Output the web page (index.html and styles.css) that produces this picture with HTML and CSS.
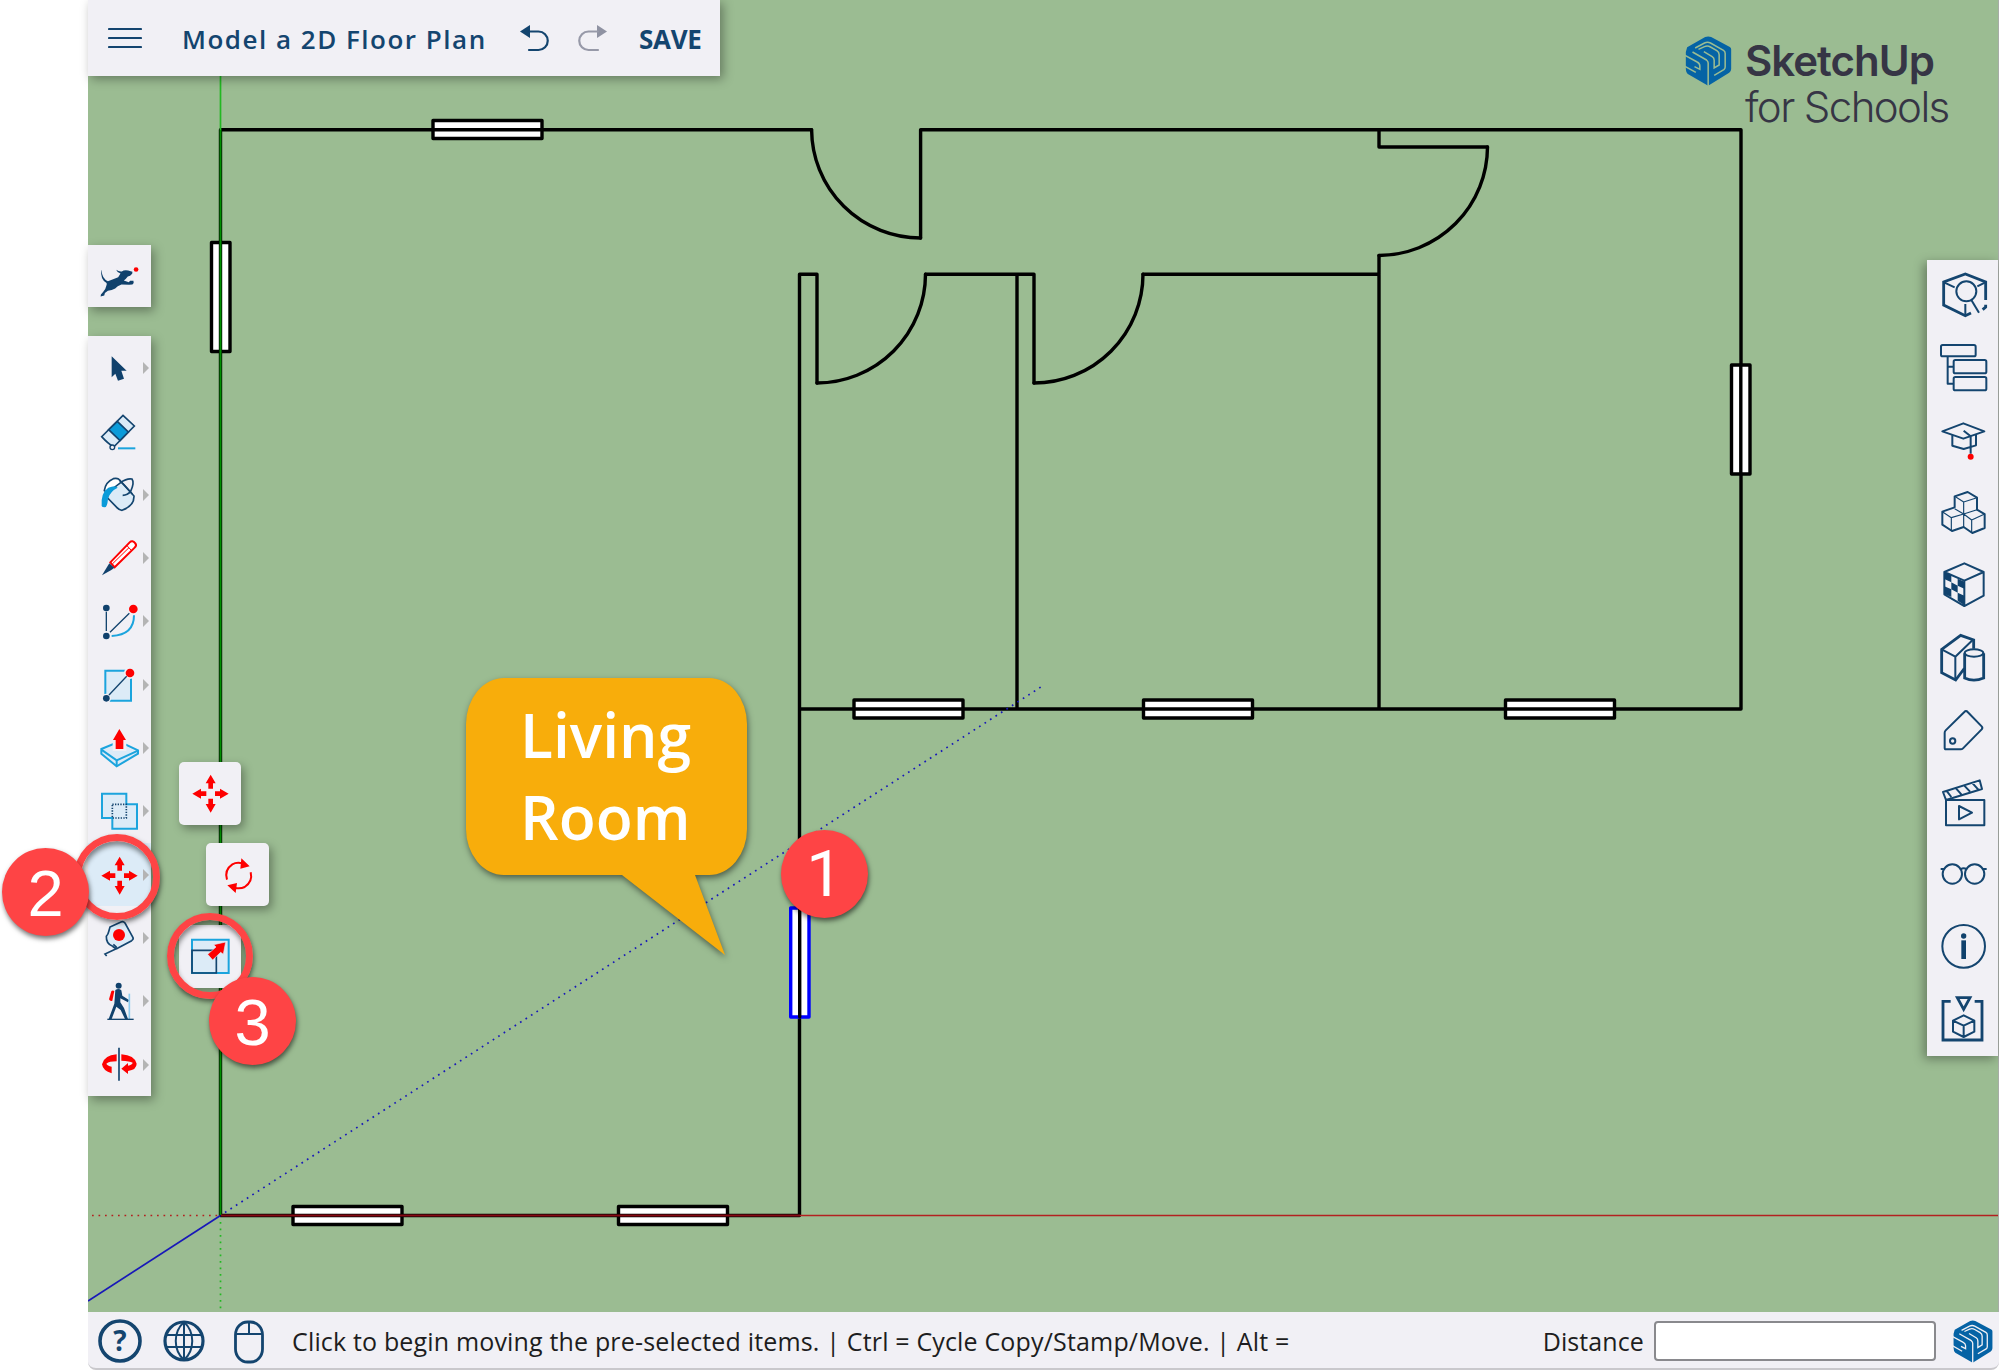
FILE: index.html
```html
<!DOCTYPE html>
<html lang="en">
<head>
<meta charset="utf-8">
<title>Model a 2D Floor Plan</title>
<link rel="stylesheet" href="styles.css">
</head>
<body>
<svg class="defs" width="0" height="0" aria-hidden="true">
  <defs>
    <g id="move-arrows">
      <path d="M359 349l15 26h-8v16h-14v-16h-8zM359 463l15-26h-8v-16h-14v16h-8zM304 406l26-15v8h16v14h-16v8zM413 406l-26-15v8h-15v14h15v8z"/>
    </g>
    <g id="brand-mark">
      <path class="mark" d="M136 49Q145 46 154 49L210 79Q214 81 214 86V145Q214 152 208 156L145 195L84 160Q78 156 78 143V94L82 80z"/>
      <path class="gap" d="M74 103L112 124Q120 128 120 136V146L104 138"/>
      <path class="gap" d="M74 136L108 155"/>
      <path class="gap" d="M145 198V127Q145 122 140 118L98 94M106 82L134 67Q143 63 152 67L191 89Q196 92 196 98V139Q196 144 192 147L163 164"/>
      <path class="gap" d="M116 86L134 78Q143 74 152 79L171 90Q178 94 178 102V133L163 142V119Q163 112 157 108L132 93"/>
    </g>
  </defs>
</svg>
<div class="app">
  <main class="workspace">
    <svg class="plan" viewBox="88 0 1911 1312" width="1911" height="1312">
      <g class="wall">
        <path d="M220.5 1215.5V129.7H811.6M920.6 238V129.7H1741V709H799.5M799.5 1215.5V274.3H817V383M925.5 274.3H1034V383M1143 274.3H1379M1017 274.3V709M1379 129.7V147H1487.5M1379 255.5V709M220.5 1215.5H799.5"/>
        <path d="M811.6 129.7A109 109 0 0 0 920.6 238M817 383A109 109 0 0 0 925.5 274.3M1034 383A109 109 0 0 0 1143 274.3M1487.5 147A109 109 0 0 1 1379 255.5"/>
      </g>
      <g class="window">
        <rect x="433" y="120.5" width="109" height="18"/>
        <rect x="211.500" y="242.500" width="18.500" height="109"/>
        <rect x="854" y="700" width="109" height="18"/>
        <rect x="1143.500" y="700" width="109" height="18"/>
        <rect x="1505.500" y="700" width="109" height="18"/>
        <rect x="1731.500" y="365" width="18.500" height="109"/>
        <rect x="293" y="1206.500" width="109" height="18"/>
        <rect x="618.500" y="1206.500" width="109" height="18"/>
        <rect class="selected" x="790.700" y="908" width="18.300" height="109"/>
      </g>
      <path class="wall" d="M433 129.700H542M854 709H963M1143.500 709H1252.500M1505.500 709H1614.500M1740.800 365V474M799.700 908V1017M220.500 243V352M293 1215.500H402M618.500 1215.500H727.500"/>
      <path class="axis green" d="M220.500 76V130"/>
      <path class="axis dark-green" d="M220.500 130V1215"/>
      <path class="axis green dotted" d="M220.500 1222V1311"/>
      <path class="axis dark-red" d="M221 1215.500H800"/>
      <path class="axis red" d="M800 1215.500H1998"/>
      <path class="axis red dotted" d="M92 1215.500H218"/>
      <path class="axis blue" d="M220.500 1215.500L88 1301"/>
      <path class="axis blue dotted" d="M225 1212.500L1044 685"/>
    </svg>
  </main>

  <header class="topbar">
    <svg class="menu-icon" viewBox="0 0 34 22" width="34" height="22"><path d="M1 2H33M1 11H33M1 20H33"/></svg>
    <h1 class="title">Model a 2D Floor Plan</h1>
    <svg class="undo" viewBox="0 0 30 28" width="30" height="28"><path class="head" d="M0 6.500L10 0V13z"/><path d="M9 6.500H18.500A9 9 0 0 1 18.500 25H9"/></svg>
    <svg class="undo redo" viewBox="0 0 30 28" width="30" height="28"><path class="head" d="M30 6.500L20 0V13z"/><path d="M21 6.500H11.500A9 9 0 0 0 11.500 25H21"/></svg>
    <span class="save">SAVE</span>
  </header>

  <div class="brand">
    <svg viewBox="76 46 140 150" width="47" height="50"><use href="#brand-mark"/></svg>
    <div class="brand-text"><b>SketchUp</b><span>for Schools</span></div>
  </div>

  <div class="search-tool">
    <svg viewBox="24 28 190 188" width="63" height="63">
      <path class="navy-fill" d="M65 103Q66 128 84 136Q100 130 115 124L122 113Q112 111 109 102Q117 108 126 107Q132 102 145 104L158 108Q160 114 151 120L144 122Q139 129 132 134L147 139L151 135H161Q164 142 158 146L148 147L125 146Q112 151 106 158Q96 164 84 165L75 172L73 179L62 182L63 176L70 168L76 160L80 148Q82 144 79 141Q61 130 64 103z"/>
      <circle class="red-fill" cx="169" cy="101" r="7"/>
    </svg>
  </div>

  <nav class="toolbar">
    <div class="tool more"><svg viewBox="24 303 190 190"><path class="navy-fill" d="M95 364L140 407H124L132 431L114 437L106 416L95 427z"/></svg></div>
    <div class="tool"><svg viewBox="24 493 190 190"><path class="navy-line pale" d="M129 542L163 574L101 637Q84 627 65 606z"/><path class="navy-line sky" d="M112 560L145 592L120 618L86 585z"/><circle class="navy-line thin" cx="97" cy="638" r="7" fill="#f1f0f5"/><path class="sky-line" d="M114 641H166"/></svg></div>
    <div class="tool more"><svg viewBox="24 683 190 190"><path class="navy-line pale" d="M75 768L120 736L162 782Q163 812 126 825Q118 825 111 817L80 785"/><path class="navy-line white" d="M73 766Q76 740 100 730Q120 726 122 742Q100 756 86 775z"/><path class="sky-fill" d="M65 812Q62 772 85 757Q107 748 113 757Q90 768 84 790Q82 816 74 816Q66 816 65 812z"/><path class="navy-line" fill="none" d="M121 742Q141 728 156 731Q164 742 152 768Q143 780 128 780M121 737L133 749L157 776"/></svg></div>
    <div class="tool more"><svg viewBox="24 873 190 190"><path class="red-line white" d="M91 982L149 922Q157 914 166 925Q171 931 164 938L104 997z"/><path class="red-line hair" d="M140 931L154 946M98 986L147 938"/><path class="navy-fill" d="M88 985L103 998L94 1005L66 1021z"/></svg></div>
    <div class="tool more"><svg viewBox="24 58 190 190"><path class="navy-line thin" d="M79 126V184M90 188L148 131"/><path class="sky-line" fill="none" d="M95 199Q162 196 162 137"/><circle class="navy-fill" cx="79" cy="115" r="10"/><circle class="navy-fill" cx="79" cy="199" r="10"/><circle class="red-fill" cx="160" cy="118" r="13"/></svg></div>
    <div class="tool more"><svg viewBox="24 248 190 190"><path class="sky-line pale" d="M76 301H153V391H76z"/><circle cx="79" cy="384" r="14" fill="#f1f0f5"/><circle cx="150" cy="308" r="18" fill="#f1f0f5"/><path class="navy-line thin" d="M87 374L140 318"/><circle class="navy-fill" cx="79" cy="384" r="10"/><circle class="red-fill" cx="150" cy="308" r="13"/></svg></div>
    <div class="tool more"><svg viewBox="24 438 190 190"><path class="sky-line pale" d="M64 537L118 515L174 541V551L110 589L64 551z"/><path class="sky-line" fill="none" d="M64 539L110 571L174 542M110 571V588"/><path d="M98 510H139V543H98z" fill="#f1f0f5"/><path class="red-fill" d="M118 477L138 510H130V537H107V510H99z"/></svg></div>
    <div class="tool more"><svg viewBox="24 628 190 190"><path class="sky-line pale" d="M66 672H139V704H171V777H97V745H66z"/><path class="navy-line" fill="none" stroke-dasharray="4 4" d="M97 704H139V745H97z"/></svg></div>
    <div class="tool more active"><svg viewBox="264 308 190 190"><use class="red-fill" href="#move-arrows"/></svg></div>
    <div class="tool more"><svg viewBox="264 498 190 190"><path class="navy-line pale" d="M330 561L363 546Q370 543 375 549L399 593Q401 598 395 602L354 624Q347 628 338 619Q318 612 319 589Q325 582 326 575z"/><path class="navy-line" fill="none" d="M352 625L315 642L320 648M340 613L350 622"/><circle class="red-fill" cx="357" cy="585" r="18"/></svg></div>
    <div class="tool more"><svg viewBox="264 688 190 190"><circle class="navy-fill" cx="356" cy="738" r="9"/><path class="navy-fill" d="M346 751Q356 745 364 752L367 768L387 781L384 788L361 776L361 788L372 805L384 838H375L362 811L349 801L335 838H326L343 792z"/><path class="red-fill" d="M334 755Q337 751 343 754L337 783Q331 787 327 779z"/><path d="M388 762V838" stroke="#8ccbf0" stroke-width="5"/><path class="navy-line thin" d="M322 839H401"/></svg></div>
    <div class="tool more"><svg viewBox="264 878 190 190"><path class="red-fill" d="M350 942Q312 945 306 972Q309 992 335 999V979Q322 976 319 970Q328 963 350 963zM364 942Q404 945 410 970Q410 988 384 992V1001L364 985L384 968V976Q397 973 398 967Q390 962 364 961z"/><path class="navy-line" d="M357 922V1021"/></svg></div>
  </nav>

  <div class="flyout fly-move"><svg viewBox="264 311 189 189"><use class="red-fill" href="#move-arrows"/></svg></div>
  <div class="flyout fly-rotate"><svg viewBox="618 310 189 189"><path class="red-line" fill="none" d="M681 420Q672 391 697 374Q710 366 728 371M752 398Q759 426 734 442Q723 448 705 445"/><path class="red-fill" d="M724 356L749 380L721 387zM707 460L682 437L711 430z"/></svg></div>
  <div class="flyout fly-scale"><svg viewBox="536 555 189 189"><path class="sky-line pale" d="M575 599H685V699H575z"/><path class="navy-line" fill="none" d="M575 631H648V699H575z"/><path class="red-fill" stroke="#dcebf7" stroke-width="2" d="M676 606L669 643L661 637L637 660L622 643L647 621L640 614z"/></svg></div>

  <aside class="panels">
    <div class="panel"><svg viewBox="50 30 214 217"><path class="line heavy" d="M226 150V96L165 72L100 96V165L165 197L182 189"/><path class="line heavy" d="M217 179L226 171V164"/><path class="line" d="M165 197V162M101 97L133 112M225 97L201 109"/><circle class="line" cx="168" cy="124" r="30"/><path class="line" d="M183 150L206 188"/></svg></div>
    <div class="panel"><svg viewBox="50 247 214 217"><rect class="line" x="92" y="286" width="104" height="34" rx="5"/><rect class="line" x="130" y="331" width="98" height="40" rx="5"/><rect class="line" x="130" y="382" width="98" height="40" rx="5"/><path class="line" d="M112 320V402H130M112 351H130"/></svg></div>
    <div class="panel"><svg viewBox="50 464 214 217"><path class="line" d="M159 519L222 543L159 565L96 543zM126 554V586L160 596L197 585V553M160 541L181 558V610"/><circle class="red-fill" cx="181" cy="619" r="9"/></svg></div>
    <div class="panel"><svg viewBox="50 682 214 217"><path class="line" d="M172 727L200 744V780L223 793V835L186 850L160 832L125 844L96 825V786L133 773V740z"/><path class="line fine" d="M133 740L160 757L200 744M160 757V793L133 777M96 786L123 804L160 793L184 811L223 793M123 804V844M184 811V850M160 793V832M160 793L200 780"/></svg></div>
    <div class="panel"><svg viewBox="50 899 214 217"><path class="line" d="M162 942L220 968V1039L162 1070L102 1035V968zM102 968L162 994V1070M162 994L220 968"/><path class="dark" d="M102 968L123 978V999L102 989zM142 988L162 997V1018L142 1009zM123 999L142 1009V1030L123 1020zM102 1011L123 1020V1043L102 1034zM142 1030L162 1039V1068L142 1054z"/></svg></div>
    <div class="panel"><svg viewBox="50 1116 214 217"><path class="line heavy" d="M163 1254L136 1290L94 1268V1198L151 1156L190 1170V1196M163 1210V1284Q190 1297 220 1284V1210"/><path class="line" d="M94 1198L135 1220V1290M135 1220L187 1170"/><ellipse class="line" cx="191" cy="1209" rx="28" ry="11"/></svg></div>
    <div class="panel"><svg viewBox="50 103 214 217"><path class="line" d="M162 157Q167 151 172 157L214 200Q218 204 214 209L158 266Q155 269 151 269H107Q103 269 103 264V219Q103 215 106 212z"/><circle class="line" cx="127" cy="244" r="8"/></svg></div>
    <div class="panel"><svg viewBox="50 320 214 217"><path class="line" d="M107 419H222V495H107zM107 419L98 395L208 360L215 386L107 419M146 437L185 457L146 477zM110 393L123 410M137 384L153 402M162 376L179 394M187 369L204 388"/></svg></div>
    <div class="panel"><svg viewBox="50 538 214 217"><circle class="line" cx="126" cy="643" r="29"/><circle class="line" cx="193" cy="643" r="29"/><path class="line" d="M91 628H102M217 628H229M151 629Q160 622 169 629"/></svg></div>
    <div class="panel"><svg viewBox="50 755 214 217"><circle class="line" cx="160" cy="861" r="64"/><circle class="dark" cx="160" cy="830" r="8"/><path class="dark" d="M153 843H167V899H153z"/></svg></div>
    <div class="panel"><svg viewBox="50 972 214 217"><path class="line heavy" d="M121 1024H98V1140H215V1024H193M141 1013H179L160 1048z"/><path class="line" d="M160 1066L192 1082V1115L160 1131L128 1115V1082zM128 1082L160 1097L192 1082M160 1097V1131"/></svg></div>
  </aside>

  <div class="callout">
    <svg viewBox="0 0 282 280" width="282" height="280"><path d="M38 0H243A38 46 0 0 1 281 46V151A38 46 0 0 1 243 197H229L259 277L156 197H38A38 46 0 0 1 0 151V46A38 46 0 0 1 38 0z"/></svg>
    <p class="callout-text">Living<br>Room</p>
  </div>

  <div class="ring ring-move"></div>
  <div class="ring ring-scale"></div>
  <div class="badge badge-one">1</div>
  <div class="badge badge-two">2</div>
  <div class="badge badge-three">3</div>

  <footer class="status">
    <svg class="help" viewBox="0 0 44 44" width="44" height="44"><circle cx="22" cy="22" r="20"/><text x="22" y="32">?</text></svg>
    <svg class="globe" viewBox="0 0 42 42" width="42" height="42"><circle cx="21" cy="21" r="19"/><path d="M21 2V40M4 15H38M4 27H38M21 2C10 12 10 30 21 40M21 2C32 12 32 30 21 40"/></svg>
    <svg class="mouse" viewBox="0 0 30 44" width="30" height="44"><rect x="1.500" y="2" width="27" height="40" rx="12" ry="13"/><path d="M15 2V13M1.500 14H28.500"/></svg>
    <span class="hint">Click to begin moving the pre-selected items. | Ctrl = Cycle Copy/Stamp/Move. | Alt =</span>
    <label class="distance"><span>Distance</span><input type="text"></label>
    <svg class="foot-mark" viewBox="76 46 140 150" width="40" height="43"><use href="#brand-mark"/></svg>
  </footer>
</div>
</body>
</html>
```
FILE: styles.css
```css
* { box-sizing: border-box; }
body { margin: 0; background: #fff; font-family: "Open Sans", "Noto Sans", sans-serif; }
.defs { position: absolute; }
.app {
  --navy: #14456f; --panel: #f1f0f5; --green: #9bbc92; --gap: #9bbc92;
  position: relative; width: 1999px; height: 1371px; padding-left: 88px;
  display: flex; flex-direction: column; overflow: hidden;
}
.workspace { height: 1312px; flex: none; background: var(--green); border-right: 1px solid #a7aca7; }
.plan { display: block; }
.wall { fill: none; stroke: #000; stroke-width: 3.4; stroke-linejoin: round; stroke-linecap: round; }
.window rect { fill: #fff; stroke: #000; stroke-width: 3.4; stroke-linejoin: round; }
.window .selected { stroke: #00f; }
.axis { fill: none; stroke-width: 1.7; }
.green { stroke: #22b822; }
.dark-green { stroke: #009000; stroke-width: 2; }
.red { stroke: #b32020; }
.dark-red { stroke: #860912; stroke-width: 1.8; }
.blue { stroke: #1818b8; }
.dotted { stroke-dasharray: 1.7 4.8; stroke-width: 1.7; }

.topbar {
  position: absolute; left: 88px; top: 0; width: 632px; height: 76px; padding-left: 20px;
  display: flex; align-items: center; background: var(--panel); color: var(--navy);
  box-shadow: 3px 3px 10px rgba(0,0,0,.35);
}
.menu-icon { margin-top: -1px; fill: none; stroke: var(--navy); stroke-width: 2.2; stroke-linecap: round; }
.title { width: 338px; margin: 2px 0 0 40px; font-size: 26px; font-weight: 650; letter-spacing: 1.5px; white-space: nowrap; }
.undo { margin-top: 1px; fill: none; stroke: var(--navy); stroke-width: 2.2; stroke-linecap: round; }
.undo .head { fill: var(--navy); stroke: none; }
.redo { margin-left: 27px; stroke: #9799a8; }
.redo .head { fill: #8f92a2; }
.save { margin: 2px 0 0 32px; font-size: 26px; font-weight: 700; letter-spacing: -.3px; }

.brand { position: absolute; left: 1685px; top: 36px; display: flex; gap: 13px; color: #363545; }
.brand-text { display: flex; flex-direction: column; font-family: Inter, sans-serif; font-size: 42px; line-height: 46px; margin-top: 2px; white-space: nowrap; }
.brand-text b { font-weight: 600; letter-spacing: -1px; }
.brand-text span { font-weight: 300; letter-spacing: -1.6px; }
.mark { fill: #0563a5; }
.gap { fill: none; stroke: var(--gap); stroke-width: 4.6; }
.foot-mark { --gap: #f1f0f5; }

.navy-fill { fill: #10416c; }
.red-fill { fill: #fe0000; }
.sky-fill { fill: #0b9bd9; }
.navy-line { stroke: #14456f; stroke-width: 5; }
.thin { stroke-width: 4; }
.sky-line { stroke: #1ba4dd; stroke-width: 6; }
.red-line { stroke: #fe0000; stroke-width: 6; }
.hair { stroke-width: 3; }
.pale { fill: #dcebf7; }
.sky { fill: #0b9bd9; }
.white { fill: #fff; }

.search-tool, .toolbar, .flyout, .panels { position: absolute; background: var(--panel); box-shadow: 3px 4px 10px rgba(0,0,0,.35); }
.search-tool { left: 88px; top: 245px; width: 63px; height: 62px; }
.search-tool svg { display: block; }
.toolbar { left: 88px; top: 336px; width: 63px; height: 760px; display: grid; grid-template-rows: repeat(12, 1fr); }
.tool { position: relative; display: flex; min-height: 0; }
.tool svg { width: 63.333px; height: 63.333px; flex: none; }
.active { background: #dcebf7; }
.more::after { content: ""; position: absolute; left: 55px; top: 26px; border-left: 6px solid #b4b4b4; border-top: 6px solid transparent; border-bottom: 6px solid transparent; }
.flyout { width: 62px; height: 63px; border-radius: 5px; }
.flyout svg { display: block; width: 63px; height: 63px; }
.fly-move { left: 179px; top: 762px; }
.fly-rotate { left: 206px; top: 843px; width: 63px; }
.fly-scale { left: 179px; top: 925px; }

.panels { left: 1927px; top: 260px; width: 71px; height: 796px; display: grid; grid-template-rows: repeat(11, 1fr); box-shadow: -3px 3px 10px rgba(0,0,0,.35); }
.panel { display: flex; min-height: 0; }
.panel svg { width: 71.33px; height: 72.36px; flex: none; }
.line { fill: none; stroke: #14456f; stroke-width: 6; stroke-linejoin: round; }
.heavy { stroke-width: 8.5; stroke-linejoin: miter; }
.fine { stroke-width: 3.5; }
.dark { fill: #10416c; }

.callout { position: absolute; left: 466px; top: 678px; width: 282px; height: 280px; filter: drop-shadow(1px 3px 3px rgba(0,0,0,.5)); }
.callout svg { position: absolute; inset: 0; fill: #f8ad0b; }
.callout-text { position: relative; margin: 0; padding: 16px 0 0 54px; color: #fff; font-size: 60.6px; font-weight: 600; line-height: 82px; }

.ring { position: absolute; width: 86px; height: 86px; border: 7px solid #fe4445; border-radius: 50%; box-shadow: 1px 3px 5px rgba(0,0,0,.5), inset 1px 4px 5px rgba(0,0,0,.45); }
.ring-move { left: 74px; top: 834px; }
.ring-scale { left: 167px; top: 913px; }
.badge { position: absolute; width: 87px; height: 88px; border-radius: 50%; background: #fe4445; color: #fff; font: 65px/91px "Liberation Sans", sans-serif; text-align: center; box-shadow: 1px 3px 5px rgba(0,0,0,.55); }
.badge-one { left: 781px; top: 830px; font-family: Roboto, sans-serif; line-height: 88px; }
.badge-two { left: 2px; top: 848px; }
.badge-three { left: 209px; top: 977px; }

.status {
  position: relative; height: 58px; padding: 0 6px 0 10px; display: flex; align-items: center;
  background: var(--panel); border-bottom: 2px solid #c9c8cc; border-radius: 0 0 8px 8px; color: #1d1d20; font-size: 25px;
}
.status > svg { flex: none; margin-top: 2px; fill: none; stroke: #14456f; stroke-width: 2; }
.status .help circle { stroke-width: 3.6; }
.status .globe circle { stroke-width: 3.2; }
.status .help text { fill: #14456f; stroke: none; text-anchor: middle; font-size: 28px; font-weight: 700; }
.status .globe { margin-left: 21px; }
.status .mouse { margin-left: 29px; margin-top: 4px; }
.status .mouse rect { stroke-width: 2.8; }
.hint { margin: 2px 0 0 28px; width: 1005px; white-space: nowrap; letter-spacing: .165px; }
.distance { margin: 1px 0 0 auto; display: flex; align-items: center; gap: 10px; }
.distance span { margin-top: 1px; letter-spacing: .1px; }
.distance input { width: 282px; height: 40px; border: 2px solid #89898d; border-radius: 4px; background: #fff; }
.status .foot-mark { margin-left: 17px; stroke: none; }
```
